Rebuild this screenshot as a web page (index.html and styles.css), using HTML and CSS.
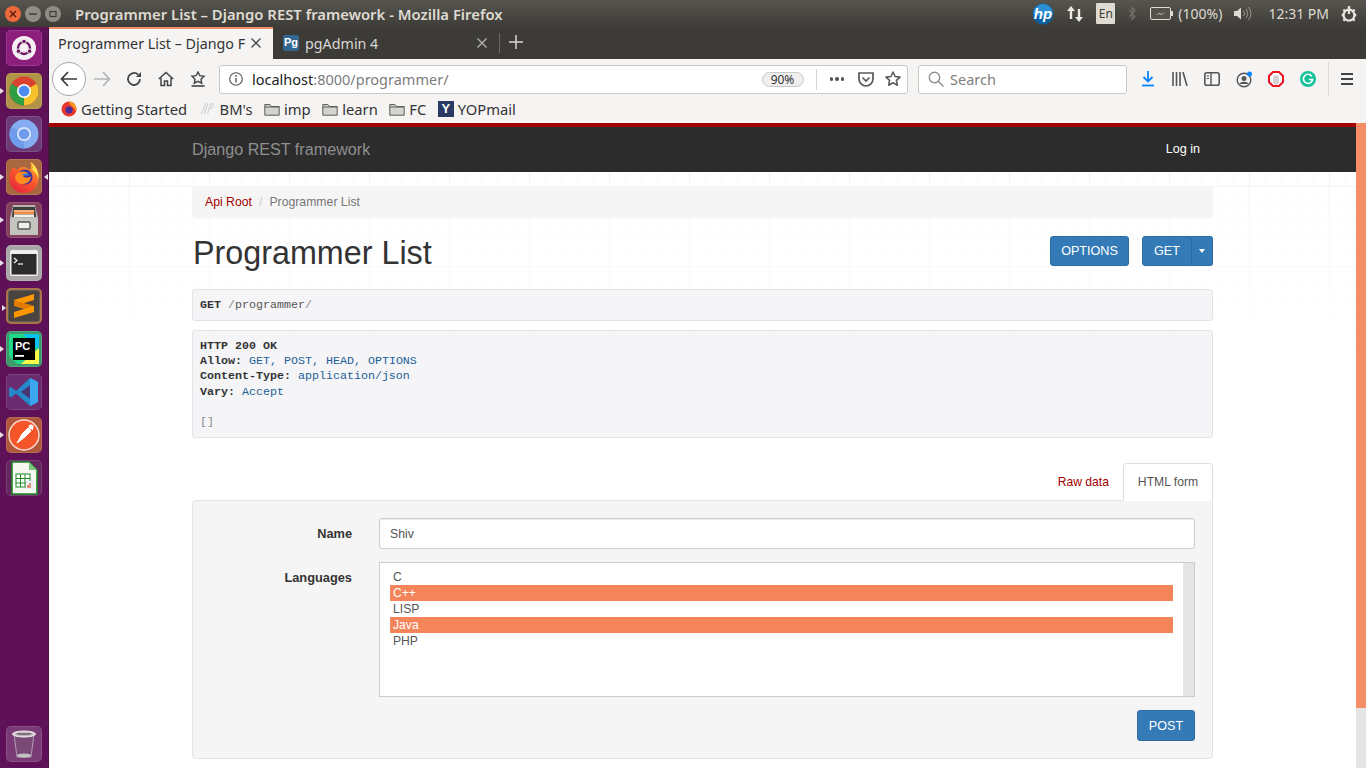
FILE: index.html
```html
<!DOCTYPE html>
<html lang="en">
<head>
    <meta charset="UTF-8">
    <meta name="viewport" content="width=device-width, initial-scale=1.0">
    <title>Programmer List</title>
    <link rel="stylesheet" href="styles.css">
</head>
<body>
    <!-- ubuntu top panel -->
    <div class="panel">
        <div class="winBtns">
            <span class="winBtn closeBtn"><svg width="8" height="8" viewBox="0 0 8 8"><path d="M1 1l6 6M7 1l-6 6" stroke="#5a1a08" stroke-width="1.4"/></svg></span>
            <span class="winBtn"><svg width="8" height="8" viewBox="0 0 8 8"><path d="M0 4h8" stroke="#3c3b37" stroke-width="1.4"/></svg></span>
            <span class="winBtn"><svg width="8" height="8" viewBox="0 0 8 8"><rect x="1" y="1.5" width="6" height="5" fill="none" stroke="#3c3b37" stroke-width="1.2"/></svg></span>
        </div>
        <div class="winTitle">Programmer List – Django REST framework - Mozilla Firefox</div>
        <div class="tray">
            <svg class="hpLogo" width="22" height="22" viewBox="0 0 22 22"><circle cx="11" cy="11" r="10.5" fill="#0a5f9f"/><path d="M1 11a10 10 0 0 1 20 0c-4 3-14 3-20 0z" fill="#2a8fd3"/><text x="11" y="16" text-anchor="middle" class="hpText">hp</text></svg>
            <svg class="trayArrows" width="18" height="18" viewBox="0 0 18 18"><path d="M5 1L1 6h2.800v8h2.400V6H9zM13 17l-4-5h2.800V4h2.400v8H17z" fill="#eceae5"/></svg>
            <span class="langBox">En</span>
            <svg class="trayBt" width="8" height="15" viewBox="0 0 8 15"><path d="M1 4l6 6.500-3 3V1.500l3 3L1 11" fill="none" stroke="#77756f" stroke-width="1.100"/></svg>
            <svg class="trayBatt" width="23" height="13" viewBox="0 0 23 13"><rect x=".5" y=".5" width="20" height="12" rx="1.500" fill="#55534d" stroke="#dfdbd2"/><rect x="21" y="4" width="2" height="5" fill="#dfdbd2"/><path d="M5 8l5-2v1.500L16 5l-5 3V6.500z" fill="#dfdbd2"/></svg>
            <span class="trayText battText">(100%)</span>
            <svg class="trayVol" width="19" height="15" viewBox="0 0 19 15"><path d="M1 5h3l4-3.500v12L4 10H1z" fill="#dfdbd2"/><path d="M10.500 5a3.500 3.500 0 0 1 0 5M13 3a7 7 0 0 1 0 9M15.500 1a10 10 0 0 1 0 13" fill="none" stroke="#9a9890" stroke-width="1"/></svg>
            <span class="trayText timeText">12:31 PM</span>
            <svg class="trayGear" width="18" height="18" viewBox="0 0 16 16"><circle cx="8" cy="9" r="4.800" fill="none" stroke="#e6e4df" stroke-width="2"/><path d="M8 1v7" stroke="#e6e4df" stroke-width="2"/><path d="M8 1.500v2M1.500 9h2M12.500 9h2M3 4l1.500 1.500M13 4l-1.500 1.500M3 14l1.500-1.500M13 14l-1.500-1.500" stroke="#e6e4df" stroke-width="2"/></svg>
        </div>
    </div>

    <div class="desk">
        <!-- launcher -->
        <div class="launcher">
            <div class="tile tileUbuntu"><svg width="26" height="26" viewBox="0 0 26 26"><circle cx="13" cy="13" r="12" fill="#f6eff4"/><circle cx="13" cy="13" r="6" fill="none" stroke="#6b1a63" stroke-width="2.400"/><circle cx="13" cy="6.500" r="2.300" fill="#6b1a63" stroke="#f6eff4"/><circle cx="7.400" cy="16.200" r="2.300" fill="#6b1a63" stroke="#f6eff4"/><circle cx="18.600" cy="16.200" r="2.300" fill="#6b1a63" stroke="#f6eff4"/></svg></div>
            <div class="tile tileChrome running"><svg width="30" height="30" viewBox="0 0 30 30"><circle cx="15" cy="15" r="14.500" fill="#d9432f"/><path d="M15 15L27.600 7.800A14.500 14.500 0 0 1 15 29.500z" fill="#f6c22c"/><path d="M15 15V29.500A14.500 14.500 0 0 1 2.400 7.800z" fill="#2f9e44"/><circle cx="15" cy="15" r="7" fill="#fff"/><circle cx="15" cy="15" r="5.400" fill="#4c8bf0"/></svg></div>
            <div class="tile tileChromium"><svg width="30" height="30" viewBox="0 0 30 30"><circle cx="15" cy="15" r="14.500" fill="#86acf2"/><path d="M15 15V29.500A14.500 14.500 0 0 1 2.400 7.800z" fill="#6f9bed"/><circle cx="15" cy="15" r="7" fill="#dfe9fb"/><circle cx="15" cy="15" r="5.300" fill="#6f9bed"/></svg></div>
            <div class="tile tileFirefox running focused"><svg width="32" height="32" viewBox="0 0 32 32"><defs><linearGradient id="foxFill" x1="0.800" y1="0" x2="0.200" y2="1"><stop offset="0" stop-color="#ffb52e"/><stop offset="0.500" stop-color="#f8542c"/><stop offset="1" stop-color="#e8243f"/></linearGradient></defs><path d="M5 6C2 10 1 14 1.500 18a14.500 14 0 0 0 29 0c.5-7-3-13-8-17 1 4 .5 6-1 8C18 5 12 5 9 9z" fill="url(#foxFill)"/><path d="M22.500 1c5 3 9 10 8 17-1-4-3-7-6-9 1-3 0-6-2-8z" fill="#ffe24a"/><circle cx="17" cy="16" r="7.500" fill="#3c2f9e"/><path d="M10 12c3-2 7-2 10 0-1 2-4 2-5 3 2 2 6 2 8 0 0 5-4 8-8 8-4 0-7-2-8-6 0-2 1-4 3-5z" fill="#ff8a1f"/><path d="M14 14c2-2 6-2 8 0-2 1-5 1-8 0z" fill="#2f7fe0"/></svg></div>
            <div class="tile tileFiles running"><svg width="30" height="32" viewBox="0 0 30 32"><path d="M4 1h22l3 13v17H1V14z" fill="#b5b5b1"/><path d="M4 3h22l1 10H3z" fill="#3e3e3c"/><rect x="5" y="6" width="20" height="2" fill="#f6b27a"/><rect x="5" y="8" width="20" height="2.500" fill="#ef8f4e"/><rect x="5" y="10.500" width="20" height="2.500" fill="#f2f0ea"/><rect x="1" y="14" width="28" height="17" fill="#c4c4c0"/><rect x="9" y="18" width="12" height="7" rx="1" fill="#efefef" stroke="#55554f" stroke-width="1.400"/></svg></div>
            <div class="tile tileTerm running"><svg width="28" height="26" viewBox="0 0 28 26"><rect width="28" height="26" rx="2" fill="#eeeeec"/><rect x="1.500" y="4" width="25" height="20.500" fill="#2b2b2b"/><path d="M4 8l3 2.500L4 13" fill="none" stroke="#eee" stroke-width="1.300"/><path d="M8 14h5" stroke="#eee" stroke-width="1.300"/></svg></div>
            <div class="tile tileSublime running"><svg width="22" height="26" viewBox="0 0 22 26"><path d="M21 1v6L1 13V7z" fill="#ff9800"/><path d="M1 7v6l20 6v-6z" fill="#e27c00"/><path d="M21 13v6L1 25v-6z" fill="#ff9800"/></svg></div>
            <div class="tile tilePycharm running"><svg width="30" height="30" viewBox="0 0 30 30"><path d="M0 0h24l6 8v22H8L0 22z" fill="#21d789"/><path d="M14 0h16v16z" fill="#07c3f2"/><path d="M30 14v16H12z" fill="#fcf84a"/><rect x="4" y="4" width="22" height="22" fill="#000"/><text x="6" y="16" class="pcText">PC</text><rect x="6" y="21" width="9" height="1.800" fill="#fff"/></svg></div>
            <div class="tile tileCode"><svg width="30" height="30" viewBox="0 0 30 30"><path d="M21 1l8 4v20l-8 4L7 16.500 2 20.500 0 19v-8l2-1 5 4z" fill="#2489ca"/><path d="M21 1l8 4v20l-8 4z" fill="#3aa7ee"/><path d="M21 8.500v13L12 15z" fill="#4a3573"/></svg></div>
            <div class="tile tilePostman running"><svg width="32" height="32" viewBox="0 0 32 32"><circle cx="16" cy="16" r="15" fill="#f4562a" stroke="#fbe1d6" stroke-width="1.400"/><path d="M9 24l5-9 6-6 3 3-6 6-8 6zM21 7l4 4" fill="#fff" stroke="#fff" stroke-linejoin="round"/><circle cx="23" cy="8" r="2.500" fill="#fff"/></svg></div>
            <div class="tile tileCalc"><svg width="28" height="34" viewBox="0 0 28 34"><path d="M2 1h17l8 8v24H2z" fill="#f7f7f2" stroke="#1e8a24" stroke-width="1.600"/><path d="M19 1l8 8h-8z" fill="#7dc47f"/><rect x="6" y="13" width="14" height="13" fill="#fff" stroke="#1e8a24"/><path d="M6 17.500h14M6 22h14M10.500 13v13M15 13v13" stroke="#1e8a24"/><rect x="16" y="20" width="7" height="8" fill="#e8eef7"/><path d="M18 27v-3M20 27v-5" stroke="#d9602f" stroke-width="1.300"/></svg></div>
            <div class="tile tileTrash"><svg width="26" height="30" viewBox="0 0 26 30"><path d="M3 5l3 23h14l3-23z" fill="#7a4a78" stroke="#b79ab5"/><ellipse cx="13" cy="5" rx="11.500" ry="3" fill="#cfc9cc" stroke="#f0eced"/><ellipse cx="13" cy="5" rx="8" ry="1.300" fill="#7d7378"/><ellipse cx="13" cy="26.500" rx="7" ry="2" fill="#c3c7bf"/></svg></div>
        </div>

        <div class="browser">
            <div class="tabStrip">
                <div class="tab tabActive">
                    <span class="tabLabel">Programmer List – Django F</span>
                    <svg class="tabClose" width="10" height="10" viewBox="0 0 10 10"><path d="M.5.5l9 9M9.500.5l-9 9" stroke="#444" stroke-width="1.300"/></svg>
                </div>
                <div class="tab tabOther">
                    <span class="pgIcon">Pg</span>
                    <span class="tabLabel">pgAdmin 4</span>
                    <svg class="tabClose" width="10" height="10" viewBox="0 0 10 10"><path d="M.5.5l9 9M9.500.5l-9 9" stroke="#b5b4af" stroke-width="1.300"/></svg>
                </div>
                <span class="tabSep"></span>
                <svg class="newTab" width="14" height="14" viewBox="0 0 14 14"><path d="M7 0v14M0 7h14" stroke="#d8d7d3" stroke-width="1.500"/></svg>
            </div>

            <div class="toolbar">
                <span class="backBtn"><svg width="18" height="16" viewBox="0 0 18 16"><path d="M8 1L1.500 8 8 15M2 8h15" fill="none" stroke="#3a3a3a" stroke-width="1.700"/></svg></span>
                <span class="navBtn navFirst"><svg width="18" height="16" viewBox="0 0 18 16"><path d="M10 1l6.500 7L10 15M16 8H1" fill="none" stroke="#b4b4b4" stroke-width="1.700"/></svg></span>
                <span class="navBtn"><svg width="16" height="16" viewBox="0 0 16 16"><path d="M14 8a6 6 0 1 1-2-4.500" fill="none" stroke="#444" stroke-width="1.800"/><path d="M15 1v5h-5z" fill="#444"/></svg></span>
                <span class="navBtn"><svg width="16" height="16" viewBox="0 0 16 16"><path d="M.8 8L8 1.500 15.200 8M3 7v7.500h3.500V10h3v4.500H13V7" fill="none" stroke="#444" stroke-width="1.500"/></svg></span>
                <span class="navBtn"><svg width="16" height="16" viewBox="0 0 16 16"><path d="M8 1l1.900 3.700 4.100.6-3 2.900.7 4L8 10.300 4.300 12.200l.7-4-3-2.900 4.100-.6z" fill="none" stroke="#444" stroke-width="1.400"/><path d="M1.500 15h13" stroke="#444" stroke-width="1.600"/></svg></span>
                <div class="urlBar">
                    <svg class="infoIcon" width="14" height="14" viewBox="0 0 14 14"><circle cx="7" cy="7" r="6.300" fill="none" stroke="#555" stroke-width="1.100"/><path d="M7 6v4.500" stroke="#555" stroke-width="1.400"/><circle cx="7" cy="3.900" r=".9" fill="#555"/></svg>
                    <span class="urlText">localhost<span class="urlDim">:8000/programmer/</span></span>
                    <span class="zoomPill">90%</span>
                    <span class="urlSep"></span>
                    <span class="urlDots"><i></i><i></i><i></i></span>
                    <svg class="pocketIcon" width="16" height="15" viewBox="0 0 16 15"><path d="M1 1h14v6a7 7 0 0 1-14 0z" fill="none" stroke="#5a5a5a" stroke-width="1.700"/><path d="M4.500 5.500L8 9l3.500-3.500" fill="none" stroke="#5a5a5a" stroke-width="1.700"/></svg>
                    <svg class="starIcon" width="16" height="16" viewBox="0 0 16 16"><path d="M8 1l2.100 4.500 4.900.6-3.600 3.300.9 4.800L8 11.800l-4.300 2.400.9-4.800L1 6.100l4.900-.6z" fill="none" stroke="#5a5a5a" stroke-width="1.600" stroke-linejoin="round"/></svg>
                </div>
                <div class="searchBar">
                    <svg width="16" height="16" viewBox="0 0 16 16"><circle cx="6.500" cy="6.500" r="5.200" fill="none" stroke="#8f8f8f" stroke-width="1.400"/><path d="M10.500 10.500l5 5" stroke="#8f8f8f" stroke-width="1.500"/></svg>
                    <span>Search</span>
                </div>
                <div class="toolIcons">
                    <span class="toolIcon"><svg width="14" height="16" viewBox="0 0 14 16"><path d="M7 0v10M2.500 6L7 10.500 11.500 6" fill="none" stroke="#0a84ff" stroke-width="1.800"/><path d="M1 14.500h12" stroke="#0a84ff" stroke-width="1.800"/></svg></span>
                    <span class="toolIcon"><svg width="16" height="14" viewBox="0 0 16 14"><path d="M1 0v14M4.500 0v14M8 0v14M11 0l4 14" stroke="#555" stroke-width="1.600" fill="none"/></svg></span>
                    <span class="toolIcon"><svg width="16" height="14" viewBox="0 0 16 14"><rect x=".8" y=".8" width="14.400" height="12.400" rx="2" fill="none" stroke="#555" stroke-width="1.600"/><path d="M7 1v12" stroke="#555" stroke-width="1.400"/><path d="M2.500 4h2.500M2.500 6.500h2.500" stroke="#555"/></svg></span>
                    <span class="toolIcon"><svg width="17" height="17" viewBox="0 0 17 17"><circle cx="8" cy="9" r="6.800" fill="none" stroke="#555" stroke-width="1.400"/><circle cx="8" cy="7.500" r="2.500" fill="#555"/><path d="M3.500 13c1-3 8-3 9 0z" fill="#555"/><circle cx="13.500" cy="3" r="2.500" fill="#0a84ff"/></svg></span>
                    <span class="toolIcon"><svg width="16" height="16" viewBox="0 0 16 16"><path d="M5 1h6l4 4v6l-4 4H5l-4-4V5z" fill="#fff" stroke="#e8141f" stroke-width="2"/><path d="M5 12V6l1-2 1 1 1-1.500L9 5l1-1 1 3v5l-2 1.500H7z" fill="#d2d2d2"/></svg></span>
                    <span class="toolIcon"><svg width="16" height="16" viewBox="0 0 16 16"><circle cx="8" cy="8" r="8" fill="#15c39a"/><path d="M11.800 5.200A4.600 4.600 0 1 0 12.600 8.500H9" fill="none" stroke="#fff" stroke-width="1.700"/></svg></span>
                </div>
                <span class="toolSep"></span>
                <span class="menuIcon"><i></i><i></i><i></i></span>
            </div>

            <div class="bookmarks">
                <span class="bookmark"><svg width="16" height="16" viewBox="0 0 16 16"><circle cx="8" cy="8" r="7.500" fill="#e8372c"/><path d="M8 .5a7.500 7.500 0 0 1 7 10C13 6 10 5 9 3z" fill="#fb9c22"/><circle cx="8" cy="9" r="3.600" fill="#4b2a9c"/></svg>Getting Started</span>
                <span class="bookmark bmFaint"><svg width="17" height="14" viewBox="0 0 16 14"><path d="M2 12L6 2c2-1 3 1 1 3l-2 7M8 12l3-10c2-1 4 1 2 3-1 1-3 2-4 2" fill="none" stroke="#d3d3d8" stroke-width="1.200"/></svg>BM's</span>
                <span class="bookmark"><svg class="folder" viewBox="0 0 16 13"><path d="M.8 12.200V1.500h5l1.500 2h7.900v8.700z" fill="#d4d3cf" stroke="#5c5c5c"/><path d="M.8 4h14.400" stroke="#5c5c5c"/></svg>imp</span>
                <span class="bookmark"><svg class="folder" viewBox="0 0 16 13"><path d="M.8 12.200V1.500h5l1.500 2h7.900v8.700z" fill="#d4d3cf" stroke="#5c5c5c"/><path d="M.8 4h14.400" stroke="#5c5c5c"/></svg>learn</span>
                <span class="bookmark"><svg class="folder" viewBox="0 0 16 13"><path d="M.8 12.200V1.500h5l1.500 2h7.900v8.700z" fill="#d4d3cf" stroke="#5c5c5c"/><path d="M.8 4h14.400" stroke="#5c5c5c"/></svg>FC</span>
                <span class="bookmark"><span class="yopIcon">Y</span>YOPmail</span>
            </div>

            <div class="viewport">
                <div class="page">
                    <div class="navbar">
                        <div class="container navRow">
                            <span class="brand">Django REST framework</span>
                            <span class="login">Log in</span>
                        </div>
                    </div>
                    <div class="content">
                        <div class="container">
                            <div class="breadcrumb">
                                <a class="redLink">Api Root</a>
                                <span class="crumbSep">/</span>
                                <span class="crumbNow">Programmer List</span>
                            </div>
                            <div class="headRow">
                                <h1>Programmer List</h1>
                                <div class="headBtns">
                                    <span class="btn optionsBtn">OPTIONS</span>
                                    <span class="btnGroup">
                                        <span class="btn getBtn">GET</span>
                                        <span class="btn caretBtn"><i class="caret"></i></span>
                                    </span>
                                </div>
                            </div>
                            <pre class="codeBox requestBox"><b>GET</b> <span class="slash">/</span>programmer<span class="slash">/</span></pre>
                            <pre class="codeBox responseBox"><b>HTTP 200 OK</b>
<b>Allow:</b> <span class="hdrVal">GET, POST, HEAD, OPTIONS</span>
<b>Content-Type:</b> <span class="hdrVal">application/json</span>
<b>Vary:</b> <span class="hdrVal">Accept</span>

<span class="slash">[]</span></pre>
                            <div class="formTabs">
                                <a class="redLink rawTab">Raw data</a>
                                <span class="htmlTab">HTML form</span>
                            </div>
                            <div class="well">
                                <div class="formRow nameRow">
                                    <label class="formLabel" for="name">Name</label>
                                    <input class="textInput" id="name" type="text" value="Shiv">
                                </div>
                                <div class="formRow">
                                    <span class="formLabel langLabel">Languages</span>
                                    <div class="listBox">
                                        <div class="options">
                                            <div class="option">C</div>
                                            <div class="option selected">C++</div>
                                            <div class="option">LISP</div>
                                            <div class="option selected">Java</div>
                                            <div class="option">PHP</div>
                                        </div>
                                        <div class="listScroll"></div>
                                    </div>
                                </div>
                                <div class="postRow">
                                    <span class="btn postBtn">POST</span>
                                </div>
                            </div>
                        </div>
                    </div>
                </div>
                <div class="scrollbar"><div class="thumb"></div></div>
            </div>
        </div>
    </div>
</body>
</html>
```

FILE: styles.css
```css
*
{
    box-sizing: border-box;
}
html, body
{
    margin: 0;
    height: 768px;
    overflow: hidden;
}
body
{
    width: 1366px;
    display: flex;
    flex-direction: column;
    font-family: "Liberation Sans", sans-serif;
    background: #3c3b37;
}

/* top panel */
.panel
{
    height: 27px;
    display: flex;
    align-items: center;
    background: linear-gradient(#57554e, #3d3c38);
    flex: none;
}
.winBtns
{
    display: flex;
    gap: 4px;
    padding-left: 5px;
    width: 75px;
}
.winBtn
{
    width: 16px;
    height: 16px;
    border-radius: 50%;
    background: #8f8d85;
    display: flex;
    align-items: center;
    justify-content: center;
}
.closeBtn
{
    background: #ee6a3d;
}
.winTitle
{
    color: #dfdbd2;
    font: 600 14.850px "Noto Sans", sans-serif;
    white-space: nowrap;
}
.tray
{
    margin-left: auto;
    display: flex;
    align-items: center;
    padding-right: 8px;
    color: #dfdbd2;
}
.hpText
{
    fill: #fff;
    font: italic bold 15px "Liberation Sans", sans-serif;
}
.trayArrows
{
    margin-left: 12px;
}
.langBox
{
    margin-left: 12px;
    width: 19px;
    height: 21px;
    background: #dfdbd2;
    color: #3c3b37;
    border-radius: 1px;
    font: 12px/21px "Noto Sans", sans-serif;
    text-align: center;
}
.trayBt
{
    margin-left: 13px;
}
.trayBatt
{
    margin-left: 14px;
}
.trayText
{
    font: 14px "Noto Sans", sans-serif;
    white-space: nowrap;
}
.battText
{
    margin-left: 5px;
}
.trayVol
{
    margin-left: 11px;
}
.timeText
{
    margin-left: 16px;
}
.trayGear
{
    margin-left: 11px;
}

/* launcher */
.desk
{
    flex: 1;
    display: flex;
    min-height: 0;
}
.launcher
{
    width: 49px;
    flex: none;
    background: #5e1157;
    border-right: 1px solid #4b0e46;
    padding: 3px 0 6px 6px;
    display: flex;
    flex-direction: column;
    gap: 7px;
}
.tile
{
    width: 36px;
    height: 36px;
    border-radius: 5px;
    display: flex;
    align-items: center;
    justify-content: center;
    flex: none;
    position: relative;
    box-shadow: inset 0 0 0 1px rgba(255,255,255,0.12);
}
.running::before
{
    content: "";
    position: absolute;
    left: -6px;
    top: 15px;
    border-left: 4px solid #e8e0e6;
    border-top: 3px solid transparent;
    border-bottom: 3px solid transparent;
}
.focused::after
{
    content: "";
    position: absolute;
    right: -6px;
    top: 15px;
    border-right: 4px solid #e8e0e6;
    border-top: 3px solid transparent;
    border-bottom: 3px solid transparent;
}
.tileUbuntu { background: #8e1e7e; }
.tileChrome { background: #b29449; }
.tileChromium { background: #6d3a78; }
.tileFirefox { background: #a9673f; }
.tileFiles { background: #84415c; }
.tileTerm { background: #a9a5a8; }
.tileSublime { background: #4a4440; border: 2px solid #aa7548; }
.tilePycharm { background: #3e9a6b; }
.tileCode { background: #6a2b6f; }
.tilePostman { background: #b0583c; }
.tileCalc { background: #64265f; }
.tileTrash
{
    margin-top: auto;
    background: #7a3a76;
}
.pcText
{
    fill: #fff;
    font: bold 11px "Liberation Sans", sans-serif;
}

/* firefox */
.browser
{
    flex: 1;
    min-width: 0;
    display: flex;
    flex-direction: column;
}
.tabStrip
{
    height: 32px;
    flex: none;
    display: flex;
    align-items: stretch;
    background: #3c3b37;
    font: 14.300px "Noto Sans", sans-serif;
}
.tab
{
    display: flex;
    align-items: center;
    padding-bottom: 3px;
}
.tabActive
{
    width: 224px;
    padding: 0 12px 2px 9px;
    background: #f5f4f3;
    border-top: 2px solid #f38e66;
    color: #333;
}
.tabActive .tabLabel
{
    white-space: nowrap;
}
.tabClose
{
    margin-left: auto;
}
.tabOther
{
    width: 217px;
    padding: 0 3px 0 10px;
    color: #d8d7d3;
}
.pgIcon
{
    width: 16px;
    height: 16px;
    margin-right: 6px;
    background: #336791;
    border-radius: 2px;
    color: #fff;
    font: bold 11px/15px "Liberation Sans", sans-serif;
    text-align: center;
}
.tabSep
{
    width: 1px;
    height: 20px;
    margin: 6px 0 0 9px;
    background: #6a6964;
}
.newTab
{
    margin: 8px 0 0 9px;
}
.toolbar
{
    height: 38px;
    flex: none;
    display: flex;
    align-items: center;
    padding: 2px 0 0 3px;
    background: #f5f4f3;
}
.backBtn
{
    width: 34px;
    height: 34px;
    border-radius: 50%;
    background: #fff;
    border: 1px solid #a9a9a9;
    display: flex;
    align-items: center;
    justify-content: center;
    flex: none;
}
.navBtn
{
    width: 32px;
    display: flex;
    justify-content: center;
    flex: none;
}
.navFirst
{
    margin-left: 0;
}
.urlBar, .searchBar
{
    height: 29px;
    background: #fff;
    border: 1px solid #c9c8c5;
    border-radius: 3px;
    display: flex;
    align-items: center;
}
.urlBar
{
    width: 689px;
    margin-left: 5px;
    padding-left: 9px;
    flex: none;
}
.infoIcon
{
    flex: none;
}
.urlText
{
    margin-left: 9px;
    font: 14.500px "Noto Sans", sans-serif;
    color: #222;
}
.urlDim
{
    color: #7d7d7d;
}
.zoomPill
{
    margin-left: auto;
    width: 42px;
    height: 15px;
    border: 1px solid #c9c8c5;
    border-radius: 8px;
    background: #efefef;
    font: 12px/13px "Noto Sans", sans-serif;
    color: #333;
    text-align: center;
}
.urlSep
{
    width: 1px;
    height: 21px;
    margin-left: 12px;
    background: #d5d4d1;
}
.urlDots
{
    display: flex;
    gap: 2px;
    margin-left: 13px;
}
.urlDots i
{
    width: 3.500px;
    height: 3.500px;
    border-radius: 50%;
    background: #555;
}
.pocketIcon
{
    margin-left: 14px;
}
.starIcon
{
    margin: 0 6px 0 11px;
}
.searchBar
{
    width: 209px;
    margin-left: 10px;
    padding-left: 9px;
    gap: 6px;
    flex: none;
    font: 14.500px "Noto Sans", sans-serif;
    color: #808080;
}
.toolIcons
{
    display: flex;
    margin-left: 5px;
}
.toolIcon
{
    width: 32px;
    display: flex;
    justify-content: center;
    align-items: center;
}
.toolSep
{
    width: 1px;
    height: 34px;
    margin-left: 4px;
    background: #dcdbd8;
}
.menuIcon
{
    display: flex;
    flex-direction: column;
    gap: 3px;
    margin-left: 12px;
}
.menuIcon i
{
    width: 12px;
    height: 2px;
    background: #444;
}
.bookmarks
{
    height: 26px;
    flex: none;
    display: flex;
    align-items: center;
    padding: 0 0 2px 12px;
    gap: 11.500px;
    background: #f5f4f3;
    font: 14.750px "Noto Sans", sans-serif;
    color: #333;
}
.bookmark
{
    display: flex;
    align-items: center;
    gap: 4px;
}
.folder
{
    width: 16px;
    height: 13px;
}
.yopIcon
{
    width: 16px;
    height: 16px;
    background: #2a3a62;
    color: #fff;
    font: bold 13px/16px "Liberation Sans", sans-serif;
    text-align: center;
}

/* page */
.viewport
{
    flex: 1;
    min-height: 0;
    display: flex;
    background: #fff;
}
.page
{
    flex: 1;
    min-width: 0;
    overflow: hidden;
}
.scrollbar
{
    width: 10px;
    flex: none;
    background: #e5e5e5;
}
.thumb
{
    height: 585px;
    background: #f38e66;
}
.container
{
    width: 1021px;
    margin-left: 143px;
}
.navbar
{
    height: 49px;
    flex: none;
    background: #2c2c2c;
    border-top: 4px solid #a30000;
}
.navRow
{
    height: 45px;
    padding-bottom: 1px;
    display: flex;
    align-items: center;
    justify-content: space-between;
}
.brand
{
    color: #8f8f8f;
    font-size: 16.150px;
}
.login
{
    padding-right: 13px;
    color: #fff;
    font-size: 12.600px;
}
.content
{
    height: 596px;
    padding-top: 14px;
    background:
        linear-gradient(rgba(255,255,255,0), #fff 190px),
        linear-gradient(#f3f3f3 1px, transparent 1px) 0 14px / 100% 80px,
        linear-gradient(90deg, #f3f3f3 1px, transparent 1px) 0 0 / 80px 100%,
        linear-gradient(#fafafa 1px, transparent 1px) 0 14px / 100% 16px,
        linear-gradient(90deg, #fafafa 1px, transparent 1px) 0 0 / 16px 100%;
}
.breadcrumb
{
    height: 32px;
    padding: 0 13px;
    display: flex;
    align-items: center;
    gap: 7px;
    background: #f5f5f5;
    border-radius: 4px;
    font-size: 12.250px;
}
.redLink
{
    color: #a30000;
}
.crumbSep
{
    color: #ccc;
}
.crumbNow
{
    color: #777;
}
.headRow
{
    height: 71px;
    display: flex;
    justify-content: space-between;
    align-items: flex-start;
}
h1
{
    margin: 17px 0 0 1px;
    font-size: 32.300px;
    line-height: 36px;
    font-weight: 400;
    color: #333;
}
.headBtns
{
    display: flex;
    gap: 13px;
    margin-top: 18px;
}
.btn
{
    display: inline-flex;
    align-items: center;
    justify-content: center;
    height: 30px;
    background: #337ab7;
    border: 1px solid #2e6da4;
    border-radius: 3px;
    color: #fff;
    font-size: 12.600px;
}
.optionsBtn
{
    width: 79px;
}
.btnGroup
{
    display: flex;
}
.getBtn
{
    width: 50px;
    border-radius: 3px 0 0 3px;
}
.caretBtn
{
    width: 21px;
    border-left: 0;
    border-radius: 0 3px 3px 0;
}
.caret
{
    border-top: 4px solid #fff;
    border-left: 3.500px solid transparent;
    border-right: 3.500px solid transparent;
}
.codeBox
{
    margin: 0;
    padding: 8px 7px 0;
    background: #f5f5f8;
    border: 1px solid #e3e3e6;
    border-radius: 3px;
    font: 11.670px/15.200px "Liberation Mono", monospace;
    color: #555;
}
.codeBox b
{
    color: #333;
}
.requestBox
{
    height: 32px;
}
.responseBox
{
    height: 108px;
    margin-top: 9px;
}
.slash
{
    color: #888;
}
.hdrVal
{
    color: #1c5f96;
}
.formTabs
{
    height: 38px;
    margin-top: 25px;
    display: flex;
    justify-content: flex-end;
    align-items: center;
    font-size: 12.150px;
}
.rawTab
{
    margin-right: 14px;
}
.htmlTab
{
    width: 90px;
    height: 38px;
    line-height: 36px;
    text-align: center;
    color: #555;
    background: #fff;
    border: 1px solid #ddd;
    border-bottom: 0;
    border-radius: 4px 4px 0 0;
    position: relative;
    z-index: 1;
}
.well
{
    height: 259px;
    margin-top: -1px;
    padding: 17px 17px 0 0;
    background: #f5f5f5;
    border: 1px solid #e3e3e3;
    border-radius: 4px;
}
.formRow
{
    display: flex;
    gap: 27px;
}
.nameRow
{
    margin-bottom: 13px;
    align-items: center;
}
.formLabel
{
    width: 159px;
    text-align: right;
    font-size: 12.800px;
    font-weight: 700;
    color: #333;
}
.langLabel
{
    padding-top: 8px;
}
.textInput
{
    width: 816px;
    height: 31px;
    padding: 0 10px;
    background: #fff;
    border: 1px solid #ccc;
    border-radius: 3px;
    outline: none;
    font: 12.250px "Liberation Sans", sans-serif;
    color: #555;
    box-shadow: inset 0 1px 1px rgba(0,0,0,0.075);
}
.listBox
{
    width: 816px;
    height: 135px;
    display: flex;
    background: #fff;
    border: 1px solid #ccc;
}
.options
{
    flex: 1;
    padding: 6px 10px 0;
    font-size: 12.150px;
    line-height: 16px;
    color: #555;
}
.option
{
    height: 16px;
    padding-left: 3px;
}
.selected
{
    background: #f4855b;
    color: #fff;
}
.listScroll
{
    width: 11px;
    background: #e5e5e5;
}
.postRow
{
    display: flex;
    justify-content: flex-end;
    margin-top: 13px;
}
.postBtn
{
    width: 58px;
    height: 31px;
}
```
